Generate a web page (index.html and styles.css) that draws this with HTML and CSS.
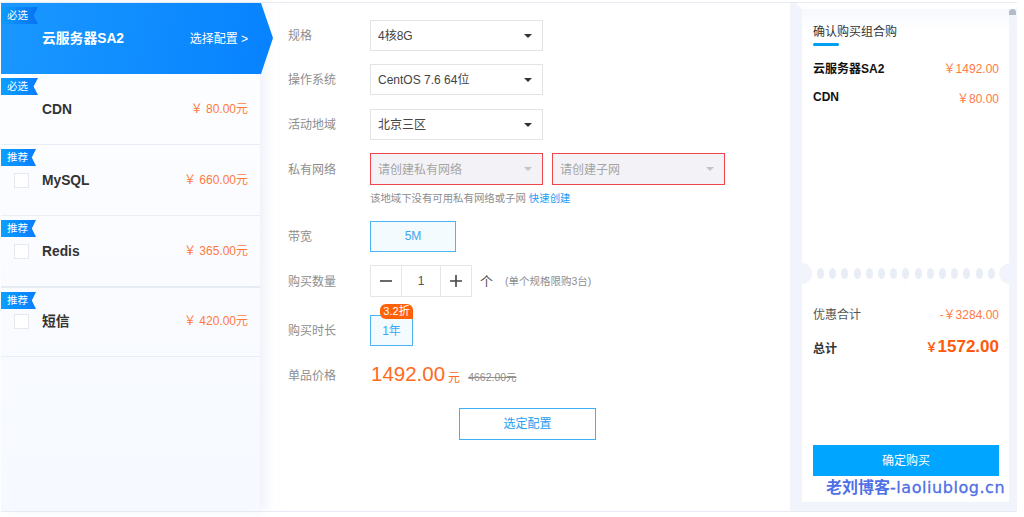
FILE: index.html
```html
<!DOCTYPE html>
<html lang="zh">
<head>
<meta charset="utf-8">
<title>确认购买组合购</title>
<link rel="stylesheet" href="styles.css">
</head>
<body>
<div class="frame">
  <aside class="side">
    <div class="item active">
      <span class="ribbon dark">必选</span>
      <div class="item-row"><span class="name">云服务器SA2</span><span class="pick">选择配置 &gt;</span></div>
    </div>
    <div class="item">
      <span class="ribbon wide">必选</span>
      <div class="item-row"><span class="name">CDN</span><span class="price">&#xFFE5;&nbsp;80.00元</span></div>
    </div>
    <div class="item">
      <span class="ribbon">推荐</span>
      <div class="item-row with-check"><i class="check"></i><span class="name">MySQL</span><span class="price">&#xFFE5;&nbsp;660.00元</span></div>
    </div>
    <div class="item">
      <span class="ribbon">推荐</span>
      <div class="item-row with-check"><i class="check"></i><span class="name">Redis</span><span class="price">&#xFFE5;&nbsp;365.00元</span></div>
    </div>
    <div class="item thick">
      <span class="ribbon">推荐</span>
      <div class="item-row with-check"><i class="check"></i><span class="name">短信</span><span class="price">&#xFFE5;&nbsp;420.00元</span></div>
    </div>
  </aside>

  <main class="form">
    <div class="row r-spec"><label>规格</label><div class="select">4核8G<i class="caret"></i></div></div>
    <div class="row r-os"><label>操作系统</label><div class="select">CentOS 7.6 64位<i class="caret"></i></div></div>
    <div class="row r-region"><label>活动地域</label><div class="select">北京三区<i class="caret"></i></div></div>
    <div class="row r-net"><label>私有网络</label>
      <div class="select error">请创建私有网络<i class="caret"></i></div>
      <div class="select error">请创建子网<i class="caret"></i></div>
    </div>
    <p class="hint">该地域下没有可用私有网络或子网<a>快速创建</a></p>
    <div class="row r-band"><label>带宽</label><div class="option band">5M</div></div>
    <div class="row r-qty"><label>购买数量</label>
      <div class="stepper">
        <span class="step"><svg width="12" height="12" viewBox="0 0 12 12"><path d="M0 6h12" stroke="#444" stroke-width="1.6"/></svg></span>
        <span class="value">1</span>
        <span class="step"><svg width="12" height="12" viewBox="0 0 12 12"><path d="M0 6h12M6 0v12" stroke="#444" stroke-width="1.6"/></svg></span>
      </div>
      <span class="unit">个</span><span class="limit">(单个规格限购3台)</span>
    </div>
    <div class="row r-time"><label>购买时长</label>
      <div class="option year">1年<span class="badge">3.2折</span></div>
    </div>
    <div class="row r-price"><label>单品价格</label>
      <span class="big">1492.00</span><span class="yuan">元</span><s class="old">4662.00元</s>
    </div>
    <div class="actions"><button class="confirm-outline">选定配置</button></div>
  </main>

  <section class="summary">
    <div class="card top">
      <h2>确认购买组合购</h2>
      <div class="line"><b>云服务器SA2</b><span>&#xFFE5;1492.00</span></div>
      <div class="line"><b>CDN</b><span>&#xFFE5;80.00</span></div>
    </div>
    <div class="perf">
      <i></i><i></i><i></i><i></i><i></i><i></i><i></i><i></i><i></i><i></i><i></i><i></i><i></i><i></i><i></i>
    </div>
    <div class="card bottom">
      <div class="line plain"><em>优惠合计</em><span>-&#xFFE5;3284.00</span></div>
      <div class="line total"><b>总计</b><strong><small>&#xFFE5;</small>1572.00</strong></div>
      <button class="buy">确定购买</button>
    </div>
  </section>
  <div class="watermark">老刘博客<span>-laoliublog.cn</span></div>
</div>
</body>
</html>
```
FILE: styles.css
```css
* { box-sizing: border-box; }
html, body { margin: 0; padding: 0; }
body {
  width: 1024px; height: 517px; background: #fff; overflow: hidden;
  font-family: "Liberation Sans", "Noto Sans CJK SC", sans-serif;
  font-size: 12px; color: #333;
}
.frame {
  position: relative; display: flex; width: 1016px; height: 510px;
  margin: 2px 0 0 1px; border-top: 1px solid #e8ebf3; border-bottom: 1px solid #e8ebf3;
}

/* left */
.side {
  position: relative; z-index: 2; flex: none; width: 259px;
  background: linear-gradient(180deg, #fdfeff 0%, #f6f9ff 100%);
  box-shadow: 6px 0 10px rgba(225,232,245,.55);
}
.item { position: relative; height: 71px; border-bottom: 1px solid #e9edf5; }
.item.thick { border-top: 2px solid #e6eaf2; margin-top: -1px; }
.item.thick .item-row { height: 66px; }
.item.active {
  width: 272px; border: 0;
  background: linear-gradient(100deg, #1a98ff 0%, #0782ff 100%);
  clip-path: polygon(0 0, 260px 0, 272px 35px, 260px 71px, 0 71px);
  color: #fff;
}
.ribbon {
  position: absolute; left: 0; top: 4px; width: 35px; height: 17px; padding-left: 6px;
  font-size: 10.5px; line-height: 17px; color: #fff;
  background: linear-gradient(90deg, #09a0ff, #0a7dff);
  clip-path: polygon(0 0, 100% 0, 88% 50%, 100% 100%, 0 100%);
}
.ribbon.wide { width: 37px; }
.ribbon.dark { width: 37px; background: linear-gradient(90deg, #0c9bff, #0772f2); }
.item-row { display: flex; align-items: center; height: 70px; padding: 0 12px 0 41px; }
.item.active .item-row { width: 259px; height: 71px; }
.item-row.with-check { padding-left: 13px; }
.check { flex: none; width: 15px; height: 15px; margin-right: 13px; background: #fff; border: 1px solid #e6e8ee; }
.name { padding-top: 1px; font-size: 13.8px; line-height: 1; font-weight: 700; color: #333; flex: 1; white-space: nowrap; }
.active .name { color: #fff; }
.pick { font-size: 12px; line-height: 1; color: #fff; }
.price { font-size: 12px; line-height: 1; color: #ff7a3d; white-space: nowrap; }

/* form */
.form { flex: none; width: 530px; padding: 17px 0 0 28px; background: #fff; }
.row { display: flex; align-items: center; }
.row label { flex: none; width: 82px; font-size: 12px; padding-bottom: 3px; color: #8e8e8e; }
.r-spec, .r-os, .r-region { height: 31px; }
.r-os { margin-top: 13px; }
.r-region { margin-top: 14px; }
.r-net { margin-top: 13px; height: 32px; gap: 9px; }
.r-net label { margin-right: -9px; padding-bottom: 1px; }
.select {
  position: relative; width: 173px; height: 100%; padding: 0 0 2px 7px;
  display: flex; align-items: center; font-size: 12px; color: #444;
  border: 1px solid #e3e3e3; background: #fff;
}
.select.error { border: 1px solid #f2454b; background: #f3f2f7; color: #a5a5a5; }
.caret {
  position: absolute; right: 10px; top: 50%; margin-top: -2px;
  border: 4px solid transparent; border-top: 4px solid #333; border-bottom: 0;
}
.error .caret { border-top-color: #c4c4c8; }
.hint { margin: 6px 0 0 82px; height: 16px; font-size: 10.4px; line-height: 16px; color: #8e8e8e; }
.hint a { margin-left: 3px; color: #1b9cf5; }
.option {
  position: relative; display: flex; align-items: center; justify-content: center;
  padding-bottom: 2px;
  border: 1px solid #4db4f5; background: #f3fbff; color: #3ca6ee; font-size: 12px;
}
.r-band { margin-top: 14px; height: 31px; }
.band { width: 86px; height: 31px; }
.r-qty { margin-top: 13px; height: 32px; }
.r-qty label { padding-bottom: 2px; }
.stepper { display: flex; height: 32px; width: 102px; border: 1px solid #e6e6e6; }
.step { display: flex; align-items: center; justify-content: center; width: 30px; }
.value { flex: 1; text-align: center; line-height: 30px; border: solid #e6e6e6; border-width: 0 1px; font-size: 12px; color: #555; }
.unit { margin-left: 8px; padding-bottom: 2px; font-size: 13px; color: #555; }
.limit { margin-left: 12px; padding-bottom: 2px; font-size: 10.5px; color: #8e8e8e; }
.r-time { margin-top: 18px; height: 31px; }
.year { width: 43px; height: 31px; }
.badge {
  position: absolute; right: -1px; top: -12px; width: 33px; height: 15px;
  border-radius: 6px 6px 0 6px; background: #ff6108; color: #fff;
  font-size: 11px; line-height: 15px; text-align: center;
}
.r-price { margin-top: 13px; height: 30px; align-items: center; }
.r-price label { padding-bottom: 0; }
.big { margin-left: 1px; font-size: 20.5px; color: #ff6a22; }
.yuan { margin: 4px 0 0 3px; font-size: 12px; color: #ff6a22; }
.old { margin: 4px 0 0 8px; font-size: 10.5px; color: #8e8e8e; }
.actions { margin-top: 19px; padding-left: 171px; }
.confirm-outline {
  display: block; width: 137px; height: 32px; padding: 0 0 3px;
  border: 1px solid #3fb1f3; background: #fff; color: #2b9df0;
  font: inherit; font-size: 12px;
}

/* right */
.summary {
  flex: none; width: 227px; padding: 6px 8px 9px 12px;
  display: flex; flex-direction: column; background: #f1f4fb;
  clip-path: polygon(0 0, 6px 0, 12px 6px, 100% 6px, 100% 100%, 0 100%);
}
.card { background: #fff; padding: 0 10px 0 11px; }
.card.top { position: relative; height: 252px; padding-top: 13px; background: linear-gradient(180deg, #f6f8fd 0, #fff 22px); }
.card.top::after {
  content: ""; position: absolute; left: 100%; top: 0; width: 7px; height: 6px;
  border-radius: 4px 4px 0 0; background: #b3bbc8;
}
h2 { margin: 0; font-size: 12px; line-height: 20px; font-weight: 400; color: #333; position: relative; height: 33px; }
h2::after { content: ""; position: absolute; left: 0; top: 21px; width: 26px; height: 3px; border-radius: 2px; background: #009ff5; }
.line { display: flex; justify-content: space-between; align-items: center; font-size: 12px; }
.top .line { height: 18px; margin-top: 3px; }
.top .line + .line { margin-top: 12px; }
.line b { color: #111; font-weight: 700; }
.line span { color: #ff7a45; font-size: 12px; }
.perf {
  flex: none; display: flex; justify-content: space-between; align-items: center;
  height: 25px; padding: 0 14px 0 15px; position: relative;
  background:
    radial-gradient(circle at 0 50%, #f1f4fb 0 10px, #fff 10.5px 100%) left / 50% 100% no-repeat,
    radial-gradient(circle at 100% 50%, #f1f4fb 0 10px, #fff 10.5px 100%) right / 50% 100% no-repeat;
}
.perf i { flex: none; width: 7px; height: 11px; border-radius: 50%; background: #e8edf6; position: relative; }
.card.bottom { flex: 1; padding-top: 18px; display: flex; flex-direction: column; }
.plain { height: 18px; }
.plain em { font-style: normal; font-size: 12px; color: #555; }
.total { height: 20px; margin-top: 15px; }
.total b { color: #333; }
.total strong { font-size: 17px; color: #ff5a0a; }
.total small { font-size: 12px; }
.buy {
  display: block; flex: none; margin-top: auto; margin-bottom: 26px; width: 186px; height: 31px; padding: 0 0 2px;
  border: 0; background: #00a5ff; color: #fff; font: inherit; font-size: 12px;
}
.watermark {
  position: absolute; left: 825px; top: 475px; z-index: 3;
  font-family: "DejaVu Sans", "Noto Sans CJK SC", sans-serif;
  font-size: 16px; font-weight: 700; line-height: 20px; color: #4e6fe6; white-space: nowrap;
}
.watermark span { font-weight: 400; letter-spacing: .55px; -webkit-text-stroke: .3px #4e6fe6; }
```
